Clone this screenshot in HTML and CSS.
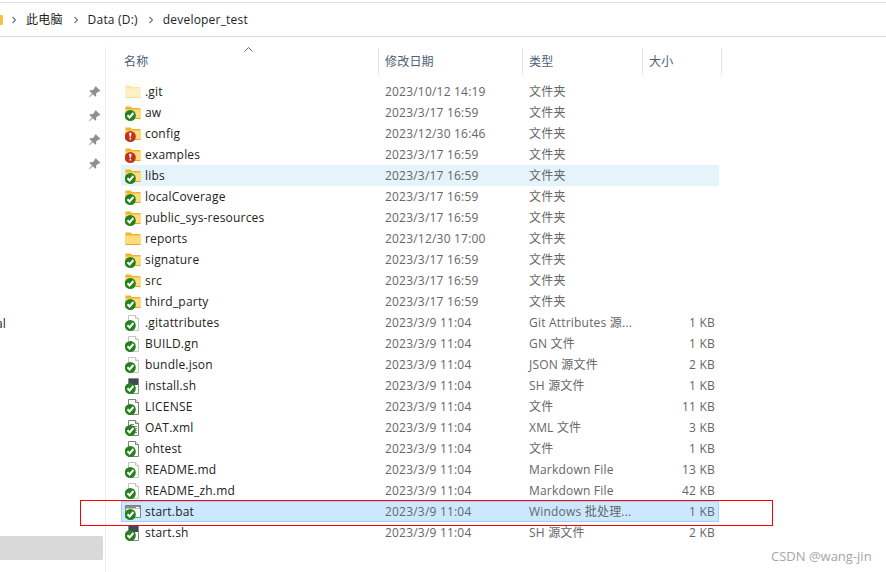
FILE: index.html
```html
<!DOCTYPE html>
<html lang="zh-CN">
<head>
    <meta charset="UTF-8">
    <title>developer_test</title>
    <link rel="stylesheet" href="styles.css">
</head>
<body>
    <svg class="sprites" width="0" height="0">
        <symbol id="folder" viewBox="0 0 16 16">
            <path d="M0.5 1.5h5l1.500 1.500h8.500v10.500h-15z" fill="#f0b429"/>
            <path d="M0.5 4.500h15v9h-15z" fill="#fcdc7c"/>
            <path d="M0.5 13.500h15" stroke="#e0a82e"/>
        </symbol>
        <symbol id="folder-light" viewBox="0 0 16 16">
            <path d="M0.5 1.5h5l1.500 1.500h8.500v10.500h-15z" fill="#fbe6a8"/>
            <path d="M0.5 4.500h15v9h-15z" fill="#fdf0c6"/>
            <path d="M0.5 13.500h15" stroke="#f3dc9c"/>
        </symbol>
        <symbol id="file" viewBox="0 0 16 16">
            <path d="M3.500 0.500h7l3 3v12h-10z" fill="#fff" stroke="#808080"/>
            <path d="M10.500 0.500v3h3" fill="#eee" stroke="#808080"/>
        </symbol>
        <symbol id="file-faint" viewBox="0 0 16 16">
            <path d="M3.500 0.500h7l3 3v12h-10z" fill="#fff" stroke="#c4c4c4"/>
            <path d="M10.500 0.500v3h3" fill="#f2f2f2" stroke="#c4c4c4"/>
        </symbol>
        <symbol id="file-text" viewBox="0 0 16 16">
            <path d="M3.500 0.500h7l3 3v12h-10z" fill="#fff" stroke="#808080"/>
            <path d="M10.500 0.500v3h3" fill="#eee" stroke="#808080"/>
            <path d="M5 4.500h4M5 6.500h7M5 8.500h7M9 10.500h3M9 12.500h3" stroke="#8a8a8a"/>
        </symbol>
        <symbol id="file-dark" viewBox="0 0 16 16">
            <path d="M3.500 0.500h10v15h-10z" fill="#fff" stroke="#8a8a8a"/>
            <path d="M4 1h9v6h-9z" fill="#3f4a55"/>
        </symbol>
        <symbol id="file-bat" viewBox="0 0 16 16">
            <path d="M0.500 1.500h15v12h-15z" fill="#f6f6f6" stroke="#808080"/>
            <path d="M1 2h14v2.500h-14z" fill="#8a8a8a"/>
            <path d="M11 3h3v1h-3z" fill="#fff"/>
        </symbol>
        <symbol id="ok" viewBox="0 0 16 16">
            <circle cx="5.300" cy="10.500" r="5.500" fill="#23821c"/>
            <path d="M2.500 10.300l2.100 2.200 3.800-4.500" fill="none" stroke="#fff" stroke-width="2"/>
        </symbol>
        <symbol id="err" viewBox="0 0 16 16">
            <circle cx="5.300" cy="10.500" r="5.500" fill="#c4301c"/>
            <path d="M4.100 6.800h2.400l-0.500 4h-1.400zM4.500 11.800h1.600v1.700h-1.600z" fill="#fff"/>
        </symbol>
        <symbol id="pin" viewBox="0 0 12 12">
            <path d="M7 0.500l4.500 4.500-1.200 0.800-1-0.300-2.300 2.300 0.300 2-1 1-2.500-2.500-3.300 3-0.500-0.500 3-3.300-2.500-2.500 1-1 2 0.300 2.300-2.300-0.300-1z" fill="#8f8f8f"/>
        </symbol>
    </svg>

    <div class="addressbar">
        <span class="crumb-folder"></span>
        <svg class="chev" viewBox="0 0 6 8"><path d="M1.500 1l3 3-3 3" fill="none" stroke="#777" stroke-width="1.200"/></svg>
        <span class="crumb">此电脑</span>
        <svg class="chev" viewBox="0 0 6 8"><path d="M1.500 1l3 3-3 3" fill="none" stroke="#777" stroke-width="1.200"/></svg>
        <span class="crumb">Data (D:)</span>
        <svg class="chev" viewBox="0 0 6 8"><path d="M1.500 1l3 3-3 3" fill="none" stroke="#777" stroke-width="1.200"/></svg>
        <span class="crumb">developer_test</span>
    </div>

    <div class="main">
        <div class="sidebar">
            <div class="pins">
                <svg class="pin"><use href="#pin"/></svg>
                <svg class="pin"><use href="#pin"/></svg>
                <svg class="pin"><use href="#pin"/></svg>
                <svg class="pin"><use href="#pin"/></svg>
            </div>
            <div class="side-label">al</div>
            <div class="side-selected"></div>
        </div>

        <div class="content">
            <div class="columns">
                <div class="col col-name">名称
                    <svg class="sort" viewBox="0 0 9 5"><path d="M0.500 4.500l4-4 4 4" fill="none" stroke="#666"/></svg>
                </div>
                <div class="col">修改日期</div>
                <div class="col">类型</div>
                <div class="col col-size">大小</div>
            </div>

            <div class="list">
                <div class="row"><svg class="icon"><use href="#folder-light"/></svg><span class="name">.git</span><span>2023/10/12 14:19</span><span>文件夹</span><span class="size"></span></div>
                <div class="row"><svg class="icon"><use href="#folder"/><use href="#ok"/></svg><span class="name">aw</span><span>2023/3/17 16:59</span><span>文件夹</span><span class="size"></span></div>
                <div class="row"><svg class="icon"><use href="#folder"/><use href="#err"/></svg><span class="name">config</span><span>2023/12/30 16:46</span><span>文件夹</span><span class="size"></span></div>
                <div class="row"><svg class="icon"><use href="#folder"/><use href="#err"/></svg><span class="name">examples</span><span>2023/3/17 16:59</span><span>文件夹</span><span class="size"></span></div>
                <div class="row hover"><svg class="icon"><use href="#folder"/><use href="#ok"/></svg><span class="name">libs</span><span>2023/3/17 16:59</span><span>文件夹</span><span class="size"></span></div>
                <div class="row"><svg class="icon"><use href="#folder"/><use href="#ok"/></svg><span class="name">localCoverage</span><span>2023/3/17 16:59</span><span>文件夹</span><span class="size"></span></div>
                <div class="row"><svg class="icon"><use href="#folder"/><use href="#ok"/></svg><span class="name">public_sys-resources</span><span>2023/3/17 16:59</span><span>文件夹</span><span class="size"></span></div>
                <div class="row"><svg class="icon"><use href="#folder"/></svg><span class="name">reports</span><span>2023/12/30 17:00</span><span>文件夹</span><span class="size"></span></div>
                <div class="row"><svg class="icon"><use href="#folder"/><use href="#ok"/></svg><span class="name">signature</span><span>2023/3/17 16:59</span><span>文件夹</span><span class="size"></span></div>
                <div class="row"><svg class="icon"><use href="#folder"/><use href="#ok"/></svg><span class="name">src</span><span>2023/3/17 16:59</span><span>文件夹</span><span class="size"></span></div>
                <div class="row"><svg class="icon"><use href="#folder"/><use href="#ok"/></svg><span class="name">third_party</span><span>2023/3/17 16:59</span><span>文件夹</span><span class="size"></span></div>
                <div class="row"><svg class="icon"><use href="#file-faint"/><use href="#ok"/></svg><span class="name">.gitattributes</span><span>2023/3/9 11:04</span><span>Git Attributes 源...</span><span class="size">1 KB</span></div>
                <div class="row"><svg class="icon"><use href="#file-faint"/><use href="#ok"/></svg><span class="name">BUILD.gn</span><span>2023/3/9 11:04</span><span>GN 文件</span><span class="size">1 KB</span></div>
                <div class="row"><svg class="icon"><use href="#file-faint"/><use href="#ok"/></svg><span class="name">bundle.json</span><span>2023/3/9 11:04</span><span>JSON 源文件</span><span class="size">2 KB</span></div>
                <div class="row"><svg class="icon"><use href="#file-dark"/><use href="#ok"/></svg><span class="name">install.sh</span><span>2023/3/9 11:04</span><span>SH 源文件</span><span class="size">1 KB</span></div>
                <div class="row"><svg class="icon"><use href="#file"/><use href="#ok"/></svg><span class="name">LICENSE</span><span>2023/3/9 11:04</span><span>文件</span><span class="size">11 KB</span></div>
                <div class="row"><svg class="icon"><use href="#file-text"/><use href="#ok"/></svg><span class="name">OAT.xml</span><span>2023/3/9 11:04</span><span>XML 文件</span><span class="size">3 KB</span></div>
                <div class="row"><svg class="icon"><use href="#file"/><use href="#ok"/></svg><span class="name">ohtest</span><span>2023/3/9 11:04</span><span>文件</span><span class="size">1 KB</span></div>
                <div class="row"><svg class="icon"><use href="#file-faint"/><use href="#ok"/></svg><span class="name">README.md</span><span>2023/3/9 11:04</span><span>Markdown File</span><span class="size">13 KB</span></div>
                <div class="row"><svg class="icon"><use href="#file-faint"/><use href="#ok"/></svg><span class="name">README_zh.md</span><span>2023/3/9 11:04</span><span>Markdown File</span><span class="size">42 KB</span></div>
                <div class="row selected"><svg class="icon"><use href="#file-bat"/><use href="#ok"/></svg><span class="name">start.bat</span><span>2023/3/9 11:04</span><span>Windows 批处理...</span><span class="size">1 KB</span></div>
                <div class="row"><svg class="icon"><use href="#file-dark"/><use href="#ok"/></svg><span class="name">start.sh</span><span>2023/3/9 11:04</span><span>SH 源文件</span><span class="size">2 KB</span></div>
            </div>
        </div>
    </div>

    <!-- annotation on top of the screenshot -->
    <div class="red-box"></div>
    <div class="watermark">CSDN @wang-jin</div>
</body>
</html>
```

FILE: styles.css
```css
* {
    box-sizing: border-box;
}
html, body {
    margin: 0;
    padding: 0;
}
body {
    position: relative;
    width: 886px;
    height: 572px;
    overflow: hidden;
    background: #fff;
    font-family: "Open Sans", "Noto Sans CJK SC", sans-serif;
    font-size: 12px;
    letter-spacing: 0.2px;
    color: #666;
}
.sprites {
    position: absolute;
}
.addressbar {
    display: flex;
    align-items: center;
    height: 35px;
    margin-top: 2px;
    border-top: 1px solid #e0e0e0;
    border-bottom: 1px solid #d9d9d9;
    color: #222;
}
.crumb-folder {
    width: 3px;
    height: 10px;
    background: #f6c343;
    border-radius: 0 1px 1px 0;
}
.chev {
    width: 6px;
    height: 8px;
    margin: 0 9px 0 8px;
}
.crumb {
    margin-right: 2px;
    line-height: 16px;
}
.main {
    display: flex;
    height: 535px;
}
.sidebar {
    display: flex;
    flex-direction: column;
    width: 106px;
    margin-top: 10px;
    border-right: 1px solid #eee;
}
.pins {
    display: flex;
    flex-direction: column;
    align-items: flex-end;
    gap: 12px;
    padding: 39px 4px 0 0;
}
.pin {
    width: 12px;
    height: 12px;
}
.side-label {
    margin: 146px 0 0 -4px;
    line-height: 16px;
    color: #222;
}
.side-selected {
    width: 103px;
    height: 24px;
    margin-top: auto;
    margin-bottom: 12px;
    background: #d9d9d9;
    border-radius: 0 2px 2px 0;
}
.content {
    flex: 1;
    padding: 11px 0 0 12px;
}
.columns {
    display: grid;
    grid-template-columns: 260px 144px 120px 80px;
    height: 27px;
    color: #4c607a;
}
.col {
    position: relative;
    padding-left: 6px;
    line-height: 27px;
    border-left: 1px solid #e5e5e5;
}
.col-name {
    border-left: none;
}
.col-size {
    border-right: 1px solid #e5e5e5;
}
.sort {
    position: absolute;
    left: 126px;
    top: -1px;
    width: 9px;
    height: 5px;
}
.list {
    display: flex;
    flex-direction: column;
    width: 598px;
    margin: 6px 0 0 3px;
}
.row {
    display: grid;
    grid-template-columns: 20px 240px 144px 113px 73px;
    align-items: center;
    height: 21px;
    padding-left: 4px;
    line-height: 21px;
    white-space: nowrap;
}
.name {
    color: #222;
}
.size {
    text-align: right;
}
.icon {
    width: 16px;
    height: 16px;
}
.hover {
    background: #e5f3fb;
}
.selected {
    background: #cce8ff;
    box-shadow: inset 0 0 0 1px #99d1ff;
}
.red-box {
    position: absolute;
    left: 80px;
    top: 500px;
    width: 693px;
    height: 26px;
    border: 1px solid #f00;
}
.watermark {
    position: absolute;
    left: 771px;
    top: 548px;
    font-size: 13px;
    letter-spacing: 0;
    line-height: 16px;
    color: #a6a6a6;
}
```
